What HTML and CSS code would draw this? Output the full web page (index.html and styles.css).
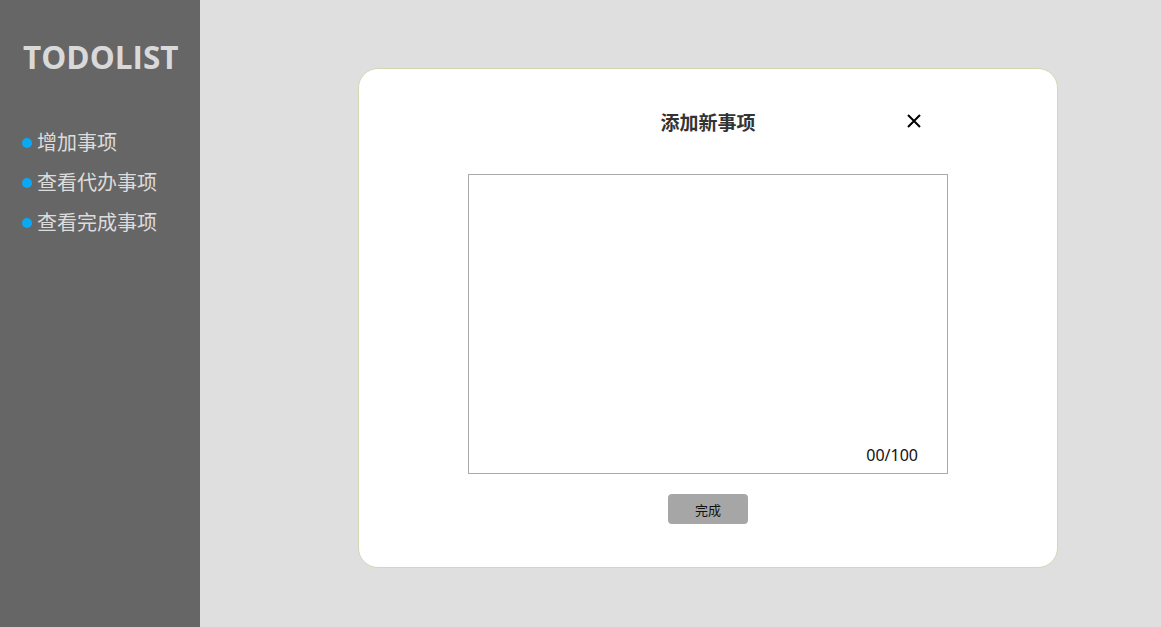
FILE: index.html
```html
<!DOCTYPE html>
<html lang="zh">
<head>
<meta charset="utf-8">
<title>TODOLIST</title>
<link rel="stylesheet" href="styles.css">
</head>
<body>
<div class="app">
  <aside class="sidebar">
    <h1 class="logo">TODOLIST</h1>
    <ul class="menu">
      <li class="menu-item"><span class="dot"></span>增加事项</li>
      <li class="menu-item"><span class="dot"></span>查看代办事项</li>
      <li class="menu-item"><span class="dot"></span>查看完成事项</li>
    </ul>
  </aside>
  <main class="main">
    <section class="modal">
      <header class="modal-head">
        <h2 class="modal-title">添加新事项</h2>
        <span class="close">
          <svg width="14" height="14" viewBox="0 0 14 14"><path d="M1 1L13 13M13 1L1 13" stroke="#000" stroke-width="2" fill="none"/></svg>
        </span>
      </header>
      <div class="editor">
        <span class="count">00/100</span>
      </div>
      <button class="done">完成</button>
    </section>
  </main>
</div>
</body>
</html>
```
FILE: styles.css
```css
html, body {
  margin: 0;
  padding: 0;
  height: 100%;
}
body {
  font-family: "Noto Sans", "Noto Sans CJK SC", sans-serif;
  background: #dfdfdf;
}
.app {
  display: flex;
  height: 100%;
}
.sidebar {
  width: 200px;
  flex: none;
  background: #666666;
  color: #dcdcdc;
}
.logo {
  margin: 37px 0 0 23px;
  font-family: "Open Sans", "Noto Sans", sans-serif;
  font-weight: 700;
  font-size: 31.5px;
  line-height: 40px;
  color: #d9d9d9;
  letter-spacing: 0;
}
.menu {
  list-style: none;
  margin: 44px 0 0 0;
  padding: 0 0 0 22px;
}
.menu-item {
  display: flex;
  align-items: center;
  height: 40px;
  font-family: "Noto Sans CJK SC", sans-serif;
  font-size: 20px;
  color: #dcdcdc;
}
.dot {
  width: 10px;
  height: 10px;
  border-radius: 50%;
  background: #0aa8f5;
  margin-right: 5px;
  margin-top: 3px;
}
.main {
  flex: 1;
  padding: 68px 0 0 158px;
}
.modal {
  box-sizing: border-box;
  width: 700px;
  height: 500px;
  background: #fff;
  border: 1px solid #d2d8b4;
  border-radius: 20px;
  display: flex;
  flex-direction: column;
  align-items: center;
}
.modal-head {
  position: relative;
  width: 100%;
  height: 105px;
  display: flex;
  justify-content: center;
}
.modal-title {
  margin: 38px 0 0 0;
  font-family: "Noto Sans CJK SC", sans-serif;
  font-size: 19px;
  line-height: 30px;
  font-weight: 700;
  color: #333;
}
.close {
  position: absolute;
  left: 548px;
  top: 45px;
  width: 14px;
  height: 14px;
  display: block;
}
.close svg { display: block; }
.editor {
  box-sizing: border-box;
  width: 480px;
  height: 300px;
  border: 1px solid #a9a9a9;
  display: flex;
  justify-content: flex-end;
  align-items: flex-end;
  padding: 0 29px 6px 0;
}
.count {
  font-family: "Noto Sans", sans-serif;
  font-size: 16px;
  line-height: 24px;
  color: #111;
}
.done {
  margin-top: 20px;
  width: 80px;
  height: 30px;
  border: none;
  border-radius: 4px;
  background: #a6a6a6;
  font-family: "Noto Sans CJK SC", sans-serif;
  font-size: 13px;
  color: #111;
  padding: 0;
}
```
